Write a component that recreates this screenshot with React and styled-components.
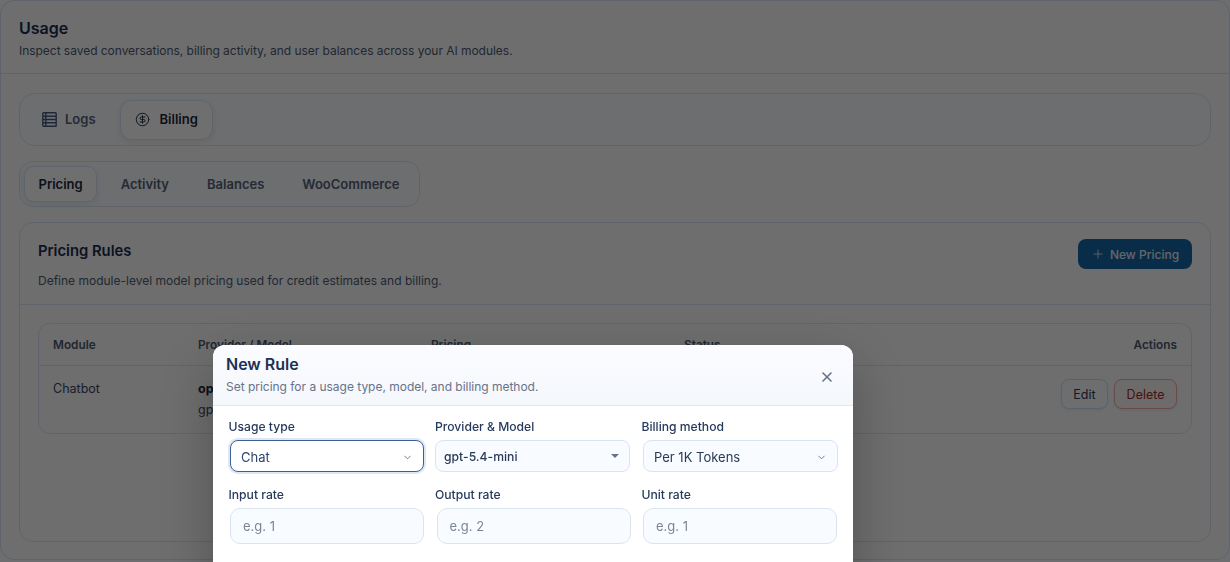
import React from "react";
import styled, { createGlobalStyle } from "styled-components";
import { CircleDollarSign, Plus, X, ChevronDown } from "lucide-react";

const Global = createGlobalStyle`
  html, body { margin: 0; padding: 0; background: #f2f3f6; }
  body { font-family: Inter, "Noto Sans", sans-serif; -webkit-font-smoothing: antialiased; }
  * { box-sizing: border-box; }
`;

const Viewport = styled.div`
  position: relative;
  width: 1230px;
  height: 562px;
  overflow: hidden;
  background: #f2f3f6;
`;
const Shell = styled.div`
  height: 560px;
  border: 1px solid #d3deee;
  border-radius: 14px;
  background: #f3f4f7;
  overflow: hidden;
`;
const PageHeader = styled.header`
  height: 73px;
  padding: 17px 18px 0;
  border-bottom: 1px solid #d3deee;
`;
const PageTitle = styled.h1`
  margin: 0;
  font-size: 16px;
  line-height: 20px;
  font-weight: 600;
  color: #1b2c4c;
`;
const PageDesc = styled.p`
  margin: 4px 0 0;
  font-size: 12px;
  line-height: 18px;
  letter-spacing: -0.035px;
  color: #4c586c;
`;
const Content = styled.main`
  padding: 19px 18px 0;
  display: flex;
  flex-direction: column;
  gap: 15px;
`;
const ModuleBar = styled.div`
  height: 53px;
  display: flex;
  align-items: center;
  gap: 9px;
  padding: 0 7px;
  border: 1px solid #d3deee;
  border-radius: 16px;
  background: #f2f3f7;
`;
const ModuleTab = styled.button`
  height: 40px;
  display: flex;
  align-items: center;
  gap: ${p => (p.$active ? "9.5px" : "8px")};
  padding: 0 ${p => (p.$active ? "14.5px" : "14px")} 1px;
  font: 600 13px Inter, sans-serif;
  color: ${p => (p.$active ? "#1c2638" : "#535f74")};
  background: ${p => (p.$active ? "#f5f6f9" : "transparent")};
  border: 1px solid ${p => (p.$active ? "#d3deee" : "transparent")};
  border-radius: 12px;
  box-shadow: ${p => (p.$active ? "0 2px 6px rgba(15,23,42,.08)" : "none")};
`;
const SubBar = styled.div`
  align-self: flex-start;
  height: 46px;
  display: flex;
  align-items: center;
  gap: 9px;
  padding: 0 5px 0 4px;
  border: 1px solid #d3deee;
  border-radius: 14px;
  background: #f2f3f7;
`;
const SubTab = styled.button`
  height: 36px;
  padding: 0 13.5px;
  font: 600 13px Inter, sans-serif;
  color: ${p => (p.$active ? "#1c2638" : "#535f74")};
  background: ${p => (p.$active ? "#f5f6f9" : "transparent")};
  border: 1px solid ${p => (p.$active ? "#d3deee" : "transparent")};
  border-radius: 10px;
  box-shadow: ${p => (p.$active ? "0 2px 6px rgba(15,23,42,.08)" : "none")};
`;
const Card = styled.section`
  height: 320px;
  border: 1px solid #d3deee;
  border-radius: 14px;
  background: #f3f4f7;
`;
const CardHead = styled.div`
  height: 82px;
  padding: 16px 18px 0;
  display: flex;
  justify-content: space-between;
  align-items: flex-start;
  border-bottom: 1px solid #d3deee;
`;
const CardTitle = styled.h2`
  margin: 2px 0 0;
  font-size: 14.8px;
  line-height: 20px;
  font-weight: 600;
  color: #1b2c4c;
`;
const CardDesc = styled.p`
  margin: 11px 0 0;
  font-size: 12px;
  line-height: 18px;
  color: #4c586c;
`;
const PrimaryButton = styled.button`
  width: 114px;
  height: 30px;
  display: flex;
  align-items: center;
  justify-content: center;
  gap: 5px;
  border: 0;
  border-radius: 8px;
  background: #15639f;
  color: #dfe3e9;
  font: 500 12px Inter, sans-serif;
`;
const CardBody = styled.div`
  padding: 18px;
`;
const Table = styled.div`
  height: 111px;
  border: 1px solid #d3deee;
  border-radius: 12px;
  overflow: hidden;
`;
const Row = styled.div`
  display: grid;
  grid-template-columns: 145px 233px 253px 1fr auto;
  padding: ${p => (p.$head ? "0 14px" : "12px 14px 0")};
  height: ${p => (p.$head ? "42px" : "auto")};
  align-items: ${p => (p.$head ? "center" : "start")};
  border-bottom: ${p => (p.$head ? "1px solid #d3deee" : "0")};
  font-size: ${p => (p.$head ? "11.8px" : "12.5px")};
  line-height: ${p => (p.$head ? "16px" : "21px")};
  font-weight: ${p => (p.$head ? 600 : 400)};
  color: ${p => (p.$head ? "#4c586c" : "#39445a")};
`;
const ModelCell = styled.div`
  line-height: 21px;
`;
const ModelName = styled.div`
  font-weight: 700;
  color: #1c2638;
`;
const Actions = styled.div`
  display: flex;
  gap: 6px;
  margin-top: 1px;
`;
const SmallButton = styled.button`
  height: 30px;
  padding: 0 11.5px;
  border-radius: 8px;
  font: 400 12.5px Inter, sans-serif;
  color: ${p => (p.$danger ? "#a32a25" : "#2c3950")};
  background: ${p => (p.$danger ? "#f3eeee" : "#f1f3f6")};
  border: 1px solid ${p => (p.$danger ? "#e7a5a2" : "#cbdaea")};
  box-shadow: 0 1px 3px rgba(15,23,42,.08);
`;
const Overlay = styled.div`
  position: absolute;
  inset: 0;
  background: rgba(0, 0, 0, 0.55);
  backdrop-filter: blur(0.5px);
`;
const Modal = styled.div`
  position: absolute;
  left: 213px;
  top: 345px;
  width: 640px;
  height: 320px;
  background: #ffffff;
  border-radius: 12px 12px 0 0;
  overflow: hidden;
  box-shadow: 0 20px 50px rgba(0,0,0,.25);
`;
const ModalHead = styled.div`
  height: 61px;
  padding: 9px 16px 0 13px;
  display: flex;
  justify-content: space-between;
  align-items: flex-start;
  border-bottom: 1px solid #e1e8f2;
  background: linear-gradient(180deg, #fbfcff 0%, #f4f7fc 100%);
`;
const ModalTitle = styled.h3`
  margin: 0;
  font-size: 16px;
  line-height: 20px;
  font-weight: 600;
  color: #1b3157;
`;
const ModalDesc = styled.p`
  margin: 4px 0 0;
  font-size: 12px;
  line-height: 18px;
  letter-spacing: -0.02px;
  color: #66738a;
`;
const CloseButton = styled.button`
  margin-top: 13px;
  padding: 0;
  width: 20px;
  height: 20px;
  display: flex;
  align-items: center;
  justify-content: center;
  background: transparent;
  border: 0;
  color: #66738a;
`;
const FormGrid = styled.div`
  padding: 12px 0 0 15.5px;
  display: grid;
  grid-template-columns: repeat(3, 196px);
  column-gap: 10.5px;
  row-gap: 14px;
`;
const Field = styled.label`
  display: flex;
  flex-direction: column;
  font-size: 12.15px;
  line-height: 17px;
  font-weight: 500;
  color: #263a5c;
`;
const SelectBox = styled.div`
  margin: 5px ${p => (p.$tight || p.$focus ? "1px" : "0")} 0 ${p => (p.$tight ? "0" : "1.5px")};
  height: 32px;
  display: flex;
  align-items: center;
  justify-content: space-between;
  padding: ${p => (p.$tight ? "0 10px 0 8px" : "2px 10px 0")};
  border-radius: 8px;
  font-size: ${p => (p.$tight ? "12.2px" : "13px")};
  font-weight: ${p => (p.$tight ? 500 : 400)};
  color: ${p => (p.$focus ? "#2b4570" : "#2a3a56")};
  background: ${p => (p.$focus ? "#ffffff" : "#f8fbff")};
  border: 1px solid ${p => (p.$focus ? "#3f5f92" : "#d9e4f1")};
  box-shadow: ${p => (p.$focus ? "0 0 0 2px #dfe7f5" : "none")};
`;
const Caret = styled.span`
  width: 0;
  height: 0;
  border-left: 4px solid transparent;
  border-right: 4px solid transparent;
  border-top: 4.5px solid #66738a;
`;
const RateInput = styled.input`
  margin: 5px 0 0 1.5px;
  height: 36px;
  padding: 0 12px;
  border-radius: 10px;
  border: 1px solid #d9e4f1;
  background: #f8fbff;
  font: 400 13px Inter, sans-serif;
  width: 194px;
  color: #2a3a56;
  &::placeholder { color: #7c8594; opacity: 1; }
`;

function LogsIcon() {
  return (
    <svg width="15" height="15" viewBox="0 0 15 15" fill="none" stroke="#46597a" strokeWidth="1.4">
      <rect x="0.8" y="0.8" width="13.4" height="13.4" rx="0.8" />
      <path d="M1 4.3h13M1 7.5h13M1 10.7h13M3.8 1v13" />
    </svg>
  );
}

export default function App() {
  return (
    <Viewport>
      <Global />
      <Shell>
        <PageHeader>
          <PageTitle>Usage</PageTitle>
          <PageDesc>Inspect saved conversations, billing activity, and user balances across your AI modules.</PageDesc>
        </PageHeader>
        <Content>
          <ModuleBar>
            <ModuleTab><LogsIcon />Logs</ModuleTab>
            <ModuleTab $active><CircleDollarSign size={15} strokeWidth={1.5} />Billing</ModuleTab>
          </ModuleBar>
          <SubBar>
            <SubTab $active>Pricing</SubTab>
            <SubTab>Activity</SubTab>
            <SubTab>Balances</SubTab>
            <SubTab>WooCommerce</SubTab>
          </SubBar>
          <Card>
            <CardHead>
              <div>
                <CardTitle>Pricing Rules</CardTitle>
                <CardDesc>Define module-level model pricing used for credit estimates and billing.</CardDesc>
              </div>
              <PrimaryButton><Plus size={14} strokeWidth={1.5} />New Pricing</PrimaryButton>
            </CardHead>
            <CardBody>
              <Table>
                <Row $head>
                  <span>Module</span><span>Provider / Model</span><span>Pricing</span><span>Status</span><span>Actions</span>
                </Row>
                <Row>
                  <span>Chatbot</span>
                  <ModelCell><ModelName>openai</ModelName>gpt-5.4-mini</ModelCell>
                  <span />
                  <span />
                  <Actions>
                    <SmallButton>Edit</SmallButton>
                    <SmallButton $danger>Delete</SmallButton>
                  </Actions>
                </Row>
              </Table>
            </CardBody>
          </Card>
        </Content>
      </Shell>
      <Overlay />
      <Modal>
        <ModalHead>
          <div>
            <ModalTitle>New Rule</ModalTitle>
            <ModalDesc>Set pricing for a usage type, model, and billing method.</ModalDesc>
          </div>
          <CloseButton><X size={16} strokeWidth={2.4} /></CloseButton>
        </ModalHead>
        <FormGrid>
          <Field>Usage type
            <SelectBox $focus>Chat<ChevronDown size={11} color="#66738a" /></SelectBox>
          </Field>
          <Field>Provider &amp; Model
            <SelectBox $tight>gpt-5.4-mini<Caret /></SelectBox>
          </Field>
          <Field>Billing method
            <SelectBox>Per 1K Tokens<ChevronDown size={11} color="#66738a" /></SelectBox>
          </Field>
          <Field>Input rate<RateInput placeholder="e.g. 1" /></Field>
          <Field>Output rate<RateInput placeholder="e.g. 2" /></Field>
          <Field>Unit rate<RateInput placeholder="e.g. 1" /></Field>
        </FormGrid>
      </Modal>
    </Viewport>
  );
}
